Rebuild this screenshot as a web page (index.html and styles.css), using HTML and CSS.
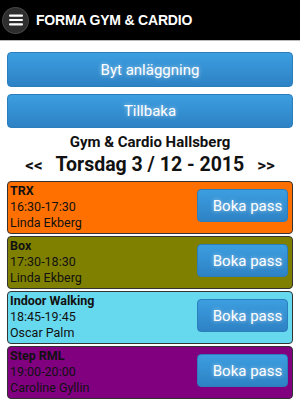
FILE: index.html
```html
<!doctype html>
<html lang="sv">
    <head>
        <meta charset="UTF-8" />
        <meta name="viewport" content="width=device-width, initial-scale=1.0" />
        <title>Forma Gym &amp; Cardio</title>
        <link rel="stylesheet" href="styles.css">
    </head>
    <body>
        <div class="header">
            <span class="menu-btn">
                <svg width="14" height="12" viewBox="0 0 14 12">
                    <rect x="0" y="0.5" width="14" height="2.2" rx="1" fill="#fff"/>
                    <rect x="0" y="4.9" width="14" height="2.2" rx="1" fill="#fff"/>
                    <rect x="0" y="9.3" width="14" height="2.2" rx="1" fill="#fff"/>
                </svg>
            </span>
            <h1>FORMA GYM &amp; CARDIO</h1>
        </div>

        <div class="content">
            <button class="btn btn-wide">Byt anläggning</button>
            <button class="btn btn-wide btn-back">Tillbaka</button>

            <h2 class="place">Gym &amp; Cardio Hallsberg</h2>
            <div class="day-nav">
                <span class="arrow">&lt;&lt;</span>
                <span class="day">Torsdag 3 / 12 - 2015</span>
                <span class="arrow">&gt;&gt;</span>
            </div>

            <div class="session orange">
                <div class="info">
                    <b>TRX</b>
                    <span>16:30-17:30</span>
                    <span>Linda Ekberg</span>
                </div>
                <button class="btn btn-book">Boka pass</button>
            </div>
            <div class="session olive">
                <div class="info">
                    <b>Box</b>
                    <span>17:30-18:30</span>
                    <span>Linda Ekberg</span>
                </div>
                <button class="btn btn-book">Boka pass</button>
            </div>
            <div class="session cyan">
                <div class="info">
                    <b>Indoor Walking</b>
                    <span>18:45-19:45</span>
                    <span>Oscar Palm</span>
                </div>
                <button class="btn btn-book">Boka pass</button>
            </div>
            <div class="session purple">
                <div class="info">
                    <b>Step RML</b>
                    <span>19:00-20:00</span>
                    <span>Caroline Gyllin</span>
                </div>
                <button class="btn btn-book">Boka pass</button>
            </div>
        </div>
    </body>
</html>
```

FILE: styles.css
```css
body {
    margin: 0;
    background: #fff;
    color: #111;
    font-family: Roboto, "Liberation Sans", sans-serif;
}

.header {
    display: flex;
    align-items: center;
    height: 40px;
    background: #000;
    border-bottom: 1px solid #bbb;
    padding-left: 3px;
}

.menu-btn {
    display: flex;
    align-items: center;
    justify-content: center;
    width: 25px;
    height: 25px;
    border-radius: 50%;
    background: #2e2e2e;
    box-shadow: 0 0 0 1px #444;
}

.header h1 {
    margin: 0 0 0 8px;
    color: #fff;
    font-family: "Liberation Sans", Arial, sans-serif;
    font-size: 14px;
    font-weight: bold;
    letter-spacing: -0.2px;
}

.content {
    display: flex;
    flex-direction: column;
    padding: 0 7px;
}

.btn {
    border: 1px solid #2b7dbc;
    border-radius: 4px;
    background: linear-gradient(#3c9ee0, #2d82c4);
    color: #fff;
    font-family: Roboto, "Liberation Sans", sans-serif;
    font-size: 15px;
    text-shadow: 0 0 4px rgba(255, 255, 255, 0.6);
    cursor: pointer;
    padding: 0;
}

.btn-wide {
    height: 35px;
    margin-top: 11px;
}

.btn-back {
    height: 34px;
    margin-top: 7px;
}

.place {
    margin: 5px 0 0;
    text-align: center;
    font-size: 15px;
    line-height: 18px;
    font-weight: bold;
}

.day-nav {
    display: flex;
    justify-content: center;
    align-items: baseline;
    gap: 13px;
    font-weight: bold;
    line-height: 24px;
    margin-top: 2px;
    margin-bottom: 4px;
}

.day-nav .arrow {
    font-size: 17px;
}

.day-nav .day {
    font-size: 19.5px;
}

.session {
    display: flex;
    align-items: center;
    justify-content: space-between;
    height: 53px;
    box-sizing: border-box;
    border: 1px solid #333;
    border-radius: 4px;
    margin-bottom: 2px;
    padding: 0 4px 1px 2px;
}

.session .info {
    display: flex;
    flex-direction: column;
    font-size: 12.5px;
    line-height: 16px;
}

.session.orange { background: #ff7000; }
.session.olive { background: #808000; }
.session.cyan { background: #66d9ef; }
.session.purple { background: #800080; }

.btn-book {
    width: 91px;
    height: 33px;
    margin-bottom: 3px;
    padding-left: 10px;
}
```
